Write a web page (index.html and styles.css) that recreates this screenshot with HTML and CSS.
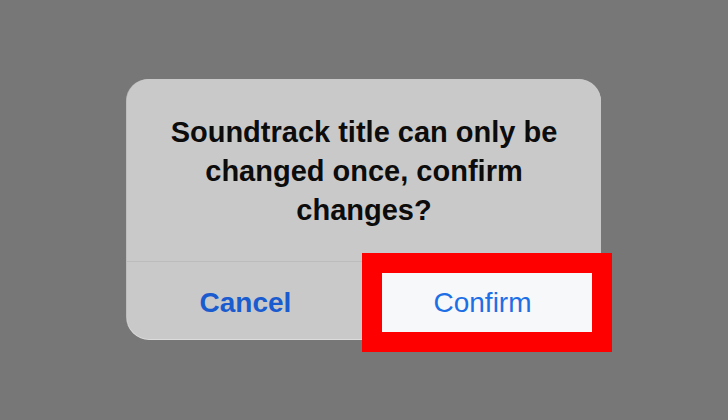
FILE: index.html
```html
<!DOCTYPE html>
<html>
<head>
<meta charset="utf-8">
<link rel="stylesheet" href="styles.css">
</head>
<body>
<div class="screen">
  <div class="alert">
    <div class="message">Soundtrack title can only be changed once, confirm changes?</div>
    <div class="actions">
      <div class="action cancel">Cancel</div>
      <div class="action confirm"><span class="highlight"></span><span class="label">Confirm</span></div>
    </div>
  </div>
</div>
</body>
</html>
```
FILE: styles.css
```css
html, body {
  margin: 0;
  padding: 0;
}
body {
  width: 728px;
  height: 420px;
  background: #777777;
  font-family: "Liberation Sans", Arial, sans-serif;
  overflow: hidden;
}
.screen {
  width: 728px;
  height: 420px;
  display: flex;
  align-items: flex-start;
  justify-content: center;
  padding-top: 79px;
  box-sizing: border-box;
}
.alert {
  width: 474px;
  height: 260px;
  background: #c9c9c9;
  border-radius: 22px;
  display: flex;
  flex-direction: column;
  box-shadow: 0 1px 0 #dcdcdc, -1px 0 0 #bdbdbd;
}
.message {
  padding: 34px 30px 0;
  height: 148px;
  font-size: 29px;
  line-height: 39px;
  font-weight: 700;
  color: #0c0c0c;
  text-align: center;
  border-bottom: 1px solid #bcbcbc;
}
.actions {
  flex: 1;
  display: flex;
}
.action {
  flex: 1;
  display: flex;
  align-items: center;
  justify-content: center;
  font-size: 28px;
  padding-top: 4px;
}
.cancel {
  color: #1a5ccf;
  font-weight: 700;
}
.confirm {
  color: #1e6fe6;
  position: relative;
}
.highlight {
  position: absolute;
  left: -2px;
  top: -9px;
  width: 210px;
  height: 59px;
  border: 20px solid #ff0000;
  background: #f7f8fa;
}
.label {
  position: relative;
}
```
